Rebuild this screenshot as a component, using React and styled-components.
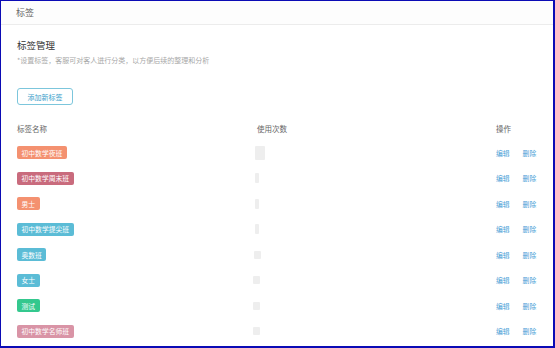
import React from "react";
import styled, { createGlobalStyle } from "styled-components";

const GlobalStyle = createGlobalStyle`
  html, body {
    margin: 0;
    padding: 0;
    background: #ffffff;
  }
  body {
    font-family: "Noto Sans CJK SC", "Noto Sans", sans-serif;
  }
`;

const Frame = styled.div`
  box-sizing: border-box;
  width: 555px;
  height: 348px;
  border-style: solid;
  border-color: #0b0bb5;
  border-width: 1px 2px 2px 1px;
  background: #fff;
  overflow: hidden;
`;

const PageHeader = styled.div`
  height: 23px;
  display: flex;
  align-items: center;
  padding-left: 15px;
  border-bottom: 1px solid #ececec;
  background: #fdfdfd;
  font-size: 9px;
  color: #666;
`;

const Body = styled.div`
  padding: 0 16px;
`;

const Title = styled.h2`
  margin: 14px 0 0;
  font-size: 9.5px;
  font-weight: 400;
  line-height: 12px;
  color: #333;
`;

const Hint = styled.p`
  margin: 4px 0 0;
  font-size: 7px;
  line-height: 10px;
  color: #a8a8a8;
`;

const AddButton = styled.button`
  box-sizing: border-box;
  margin-top: 23px;
  width: 56px;
  height: 17px;
  padding: 0;
  border: 1px solid #7cc6dc;
  border-radius: 3px;
  background: #fff;
  color: #3d9fcb;
  font-family: inherit;
  font-size: 7px;
  cursor: pointer;
`;

const Table = styled.div`
  margin-top: 11px;
`;

const Row = styled.div`
  display: grid;
  grid-template-columns: 240px 239px 1fr;
  align-items: center;
  height: ${(p) => (p.$head ? "24px" : "25.5px")};
  font-size: 7.5px;
  color: #666;
  white-space: nowrap;
`;

const Tag = styled.span`
  display: inline-flex;
  align-items: center;
  height: 13px;
  padding: 0 4.5px;
  border-radius: 2px;
  background: ${(p) => p.$color};
  color: #fff;
  font-size: 6.8px;
  justify-self: start;
`;

const Count = styled.span`
  display: block;
  width: ${(p) => p.$w}px;
  height: ${(p) => p.$h}px;
  margin-left: ${(p) => p.$x}px;
  background: #eeeeee;
  border-radius: 1px;
`;

const Actions = styled.div`
  display: flex;
  gap: 13px;
`;

const Link = styled.a`
  color: #4aa0d6;
  font-size: 6.8px;
  text-decoration: none;
  cursor: pointer;
`;

const tags = [
  { name: "初中数学夜班", color: "#f49170", count: [10, 14, -2] },
  { name: "初中数学周末班", color: "#c96b7d", count: [4, 10, -2] },
  { name: "男士", color: "#f49170", count: [4, 10, -2] },
  { name: "初中数学提尖班", color: "#5bbcd6", count: [4, 10, -2] },
  { name: "奥数班", color: "#5bbcd6", count: [7, 8, -3] },
  { name: "女士", color: "#5bbcd6", count: [7, 8, -4] },
  { name: "测试", color: "#34c88e", count: [7, 8, -4] },
  { name: "初中数学名师班", color: "#d994a6", count: [7, 8, -4] },
];

export default function App() {
  return (
    <Frame>
      <GlobalStyle />
      <PageHeader>标签</PageHeader>
      <Body>
        <Title>标签管理</Title>
        <Hint>*设置标签，客服可对客人进行分类，以方便后续的整理和分析</Hint>
        <AddButton>添加新标签</AddButton>
        <Table>
          <Row $head>
            <span>标签名称</span>
            <span>使用次数</span>
            <span>操作</span>
          </Row>
          {tags.map((t) => (
            <Row key={t.name}>
              <Tag $color={t.color}>{t.name}</Tag>
              <Count $w={t.count[0]} $h={t.count[1]} $x={t.count[2]} />
              <Actions>
                <Link>编辑</Link>
                <Link>删除</Link>
              </Actions>
            </Row>
          ))}
        </Table>
      </Body>
    </Frame>
  );
}
